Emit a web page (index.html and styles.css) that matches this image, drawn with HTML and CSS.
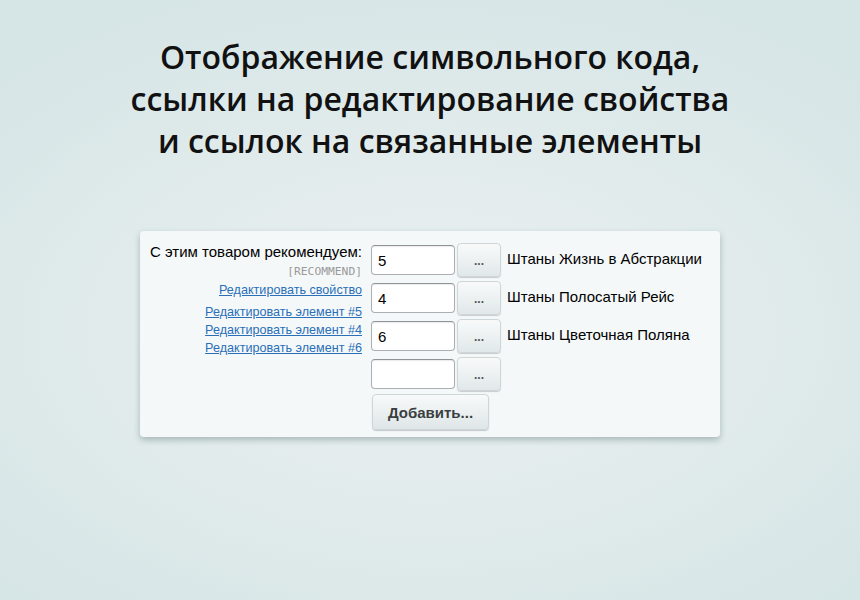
FILE: index.html
```html
<!DOCTYPE html>
<html lang="ru">
<head>
<meta charset="utf-8">
<link rel="stylesheet" href="styles.css">
</head>
<body>
<div class="page">
  <h1 class="title">Отображение символьного кода,<br>ссылки на редактирование свойства<br>и ссылок на связанные элементы</h1>
  <div class="panel">
    <div class="labels">
      <div class="label">С этим товаром рекомендуем:</div>
      <div class="code">[RECOMMEND]</div>
      <a class="link link-prop" href="#">Редактировать свойство</a>
      <a class="link link-first" href="#">Редактировать элемент #5</a>
      <a class="link" href="#">Редактировать элемент #4</a>
      <a class="link" href="#">Редактировать элемент #6</a>
    </div>
    <div class="fields">
      <div class="row"><input class="inp" value="5"><button class="dots">...</button><span class="name">Штаны Жизнь в Абстракции</span></div>
      <div class="row"><input class="inp" value="4"><button class="dots">...</button><span class="name">Штаны Полосатый Рейс</span></div>
      <div class="row"><input class="inp" value="6"><button class="dots">...</button><span class="name">Штаны Цветочная Поляна</span></div>
      <div class="row"><input class="inp" value=""><button class="dots">...</button></div>
      <div class="row"><button class="add">Добавить...</button></div>
    </div>
  </div>
</div>
</body>
</html>
```

FILE: styles.css
```css
html, body {
  margin: 0;
  padding: 0;
  height: 100%;
}
body {
  background: radial-gradient(ellipse 70% 60% at 50% 55%, #e9f0f0 0%, #e3ecec 45%, #d6e5e6 100%);
  font-family: "Liberation Sans", Arial, sans-serif;
}
.page {
  width: 860px;
  height: 600px;
  display: flex;
  flex-direction: column;
  align-items: center;
}
.title {
  margin: 36px 0 0;
  font-family: "Open Sans", sans-serif;
  font-weight: 600;
  font-size: 32px;
  line-height: 42px;
  text-align: center;
  color: #111;
}
.panel {
  margin-top: 69px;
  width: 580px;
  box-sizing: border-box;
  background: #f5f8f9;
  border-radius: 4px;
  box-shadow: 0 3px 6px rgba(60, 90, 95, 0.35);
  display: flex;
  padding: 12px 0 8px 0;
}
.labels {
  width: 222px;
  display: flex;
  flex-direction: column;
  align-items: flex-end;
}
.label {
  font-size: 15px;
  line-height: 18px;
  color: #000;
}
.code {
  margin-top: 4px;
  font-family: "DejaVu Sans Mono", monospace;
  font-size: 11.3px;
  line-height: 14px;
  color: #9a9a9a;
}
.link {
  font-size: 12.6px;
  line-height: 18px;
  color: #2a6fb8;
  text-decoration: underline;
}
.link-prop {
  margin-top: 2px;
}
.link-first {
  margin-top: 4px;
}
.fields {
  margin-left: 9px;
  display: flex;
  flex-direction: column;
  gap: 4px;
  padding-top: 0;
}
.row {
  display: flex;
  align-items: center;
  height: 34px;
}
.inp {
  width: 84px;
  height: 30px;
  box-sizing: border-box;
  border: 1px solid #a9afb2;
  border-top-color: #8e9497;
  border-radius: 4px;
  background: #fff;
  padding: 0 6px;
  font-family: "Liberation Sans", Arial, sans-serif;
  font-size: 15px;
  color: #000;
  box-shadow: inset 0 1px 1px rgba(0,0,0,0.08);
}
.dots {
  margin-left: 2px;
  width: 44px;
  height: 34px;
  box-sizing: border-box;
  border: 1px solid #cfd6d8;
  border-radius: 4px;
  background: linear-gradient(#f8fafa, #e1e8e9);
  box-shadow: 0 1px 1px rgba(0,0,0,0.18);
  font-family: "Liberation Sans", Arial, sans-serif;
  font-size: 12px;
  font-weight: bold;
  color: #555;
  padding: 2px 0 0;
}
.name {
  margin-left: 6px;
  font-size: 15px;
  color: #000;
  margin-top: -3px;
}
.add {
  margin-left: 1px;
  margin-top: 0;
  width: 117px;
  height: 36px;
  box-sizing: border-box;
  border: 1px solid #cfd6d8;
  border-radius: 4px;
  background: linear-gradient(#f8fafa, #dfe6e7);
  box-shadow: 0 1px 1px rgba(0,0,0,0.2);
  font-family: "Liberation Sans", Arial, sans-serif;
  font-size: 15px;
  font-weight: bold;
  color: #3a3f41;
}
```
